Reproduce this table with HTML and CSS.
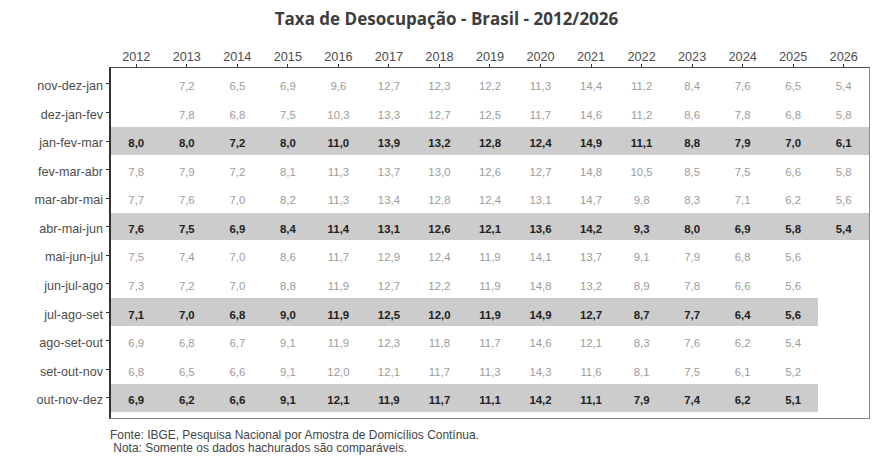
FILE: index.html
```html
<!DOCTYPE html>
<html lang="pt-BR">
<head>
<meta charset="utf-8">
<title>Taxa de Desocupação - Brasil - 2012/2026</title>
<link rel="stylesheet" href="styles.css">
</head>
<body>
<div class="figure">
  <h1 class="title">Taxa de Desocupação - Brasil - 2012/2026</h1>
  <div class="chart">
    <div class="corner"></div>
    <div class="xaxis">
      <div class="xcol"><span class="xlabel">2012</span><span class="xtick"></span></div>
      <div class="xcol"><span class="xlabel">2013</span><span class="xtick"></span></div>
      <div class="xcol"><span class="xlabel">2014</span><span class="xtick"></span></div>
      <div class="xcol"><span class="xlabel">2015</span><span class="xtick"></span></div>
      <div class="xcol"><span class="xlabel">2016</span><span class="xtick"></span></div>
      <div class="xcol"><span class="xlabel">2017</span><span class="xtick"></span></div>
      <div class="xcol"><span class="xlabel">2018</span><span class="xtick"></span></div>
      <div class="xcol"><span class="xlabel">2019</span><span class="xtick"></span></div>
      <div class="xcol"><span class="xlabel">2020</span><span class="xtick"></span></div>
      <div class="xcol"><span class="xlabel">2021</span><span class="xtick"></span></div>
      <div class="xcol"><span class="xlabel">2022</span><span class="xtick"></span></div>
      <div class="xcol"><span class="xlabel">2023</span><span class="xtick"></span></div>
      <div class="xcol"><span class="xlabel">2024</span><span class="xtick"></span></div>
      <div class="xcol"><span class="xlabel">2025</span><span class="xtick"></span></div>
      <div class="xcol"><span class="xlabel">2026</span><span class="xtick"></span></div>
    </div>
    <div class="yaxis">
      <div class="yrow"><span class="ylabel">nov-dez-jan</span><span class="ytick"></span></div>
      <div class="yrow"><span class="ylabel">dez-jan-fev</span><span class="ytick"></span></div>
      <div class="yrow"><span class="ylabel">jan-fev-mar</span><span class="ytick"></span></div>
      <div class="yrow"><span class="ylabel">fev-mar-abr</span><span class="ytick"></span></div>
      <div class="yrow"><span class="ylabel">mar-abr-mai</span><span class="ytick"></span></div>
      <div class="yrow"><span class="ylabel">abr-mai-jun</span><span class="ytick"></span></div>
      <div class="yrow"><span class="ylabel">mai-jun-jul</span><span class="ytick"></span></div>
      <div class="yrow"><span class="ylabel">jun-jul-ago</span><span class="ytick"></span></div>
      <div class="yrow"><span class="ylabel">jul-ago-set</span><span class="ytick"></span></div>
      <div class="yrow"><span class="ylabel">ago-set-out</span><span class="ytick"></span></div>
      <div class="yrow"><span class="ylabel">set-out-nov</span><span class="ytick"></span></div>
      <div class="yrow"><span class="ylabel">out-nov-dez</span><span class="ytick"></span></div>
    </div>
    <div class="panel">
      <div class="row">
        <span class="cell empty"></span><span class="cell">7,2</span><span class="cell">6,5</span><span class="cell">6,9</span><span class="cell">9,6</span><span class="cell">12,7</span><span class="cell">12,3</span><span class="cell">12,2</span><span class="cell">11,3</span><span class="cell">14,4</span><span class="cell">11,2</span><span class="cell">8,4</span><span class="cell">7,6</span><span class="cell">6,5</span><span class="cell">5,4</span>
      </div>
      <div class="row">
        <span class="cell empty"></span><span class="cell">7,8</span><span class="cell">6,8</span><span class="cell">7,5</span><span class="cell">10,3</span><span class="cell">13,3</span><span class="cell">12,7</span><span class="cell">12,5</span><span class="cell">11,7</span><span class="cell">14,6</span><span class="cell">11,2</span><span class="cell">8,6</span><span class="cell">7,8</span><span class="cell">6,8</span><span class="cell">5,8</span>
      </div>
      <div class="row comp">
        <span class="cell">8,0</span><span class="cell">8,0</span><span class="cell">7,2</span><span class="cell">8,0</span><span class="cell">11,0</span><span class="cell">13,9</span><span class="cell">13,2</span><span class="cell">12,8</span><span class="cell">12,4</span><span class="cell">14,9</span><span class="cell">11,1</span><span class="cell">8,8</span><span class="cell">7,9</span><span class="cell">7,0</span><span class="cell">6,1</span>
      </div>
      <div class="row">
        <span class="cell">7,8</span><span class="cell">7,9</span><span class="cell">7,2</span><span class="cell">8,1</span><span class="cell">11,3</span><span class="cell">13,7</span><span class="cell">13,0</span><span class="cell">12,6</span><span class="cell">12,7</span><span class="cell">14,8</span><span class="cell">10,5</span><span class="cell">8,5</span><span class="cell">7,5</span><span class="cell">6,6</span><span class="cell">5,8</span>
      </div>
      <div class="row">
        <span class="cell">7,7</span><span class="cell">7,6</span><span class="cell">7,0</span><span class="cell">8,2</span><span class="cell">11,3</span><span class="cell">13,4</span><span class="cell">12,8</span><span class="cell">12,4</span><span class="cell">13,1</span><span class="cell">14,7</span><span class="cell">9,8</span><span class="cell">8,3</span><span class="cell">7,1</span><span class="cell">6,2</span><span class="cell">5,6</span>
      </div>
      <div class="row comp">
        <span class="cell">7,6</span><span class="cell">7,5</span><span class="cell">6,9</span><span class="cell">8,4</span><span class="cell">11,4</span><span class="cell">13,1</span><span class="cell">12,6</span><span class="cell">12,1</span><span class="cell">13,6</span><span class="cell">14,2</span><span class="cell">9,3</span><span class="cell">8,0</span><span class="cell">6,9</span><span class="cell">5,8</span><span class="cell">5,4</span>
      </div>
      <div class="row">
        <span class="cell">7,5</span><span class="cell">7,4</span><span class="cell">7,0</span><span class="cell">8,6</span><span class="cell">11,7</span><span class="cell">12,9</span><span class="cell">12,4</span><span class="cell">11,9</span><span class="cell">14,1</span><span class="cell">13,7</span><span class="cell">9,1</span><span class="cell">7,9</span><span class="cell">6,8</span><span class="cell">5,6</span>
      </div>
      <div class="row">
        <span class="cell">7,3</span><span class="cell">7,2</span><span class="cell">7,0</span><span class="cell">8,8</span><span class="cell">11,9</span><span class="cell">12,7</span><span class="cell">12,2</span><span class="cell">11,9</span><span class="cell">14,8</span><span class="cell">13,2</span><span class="cell">8,9</span><span class="cell">7,8</span><span class="cell">6,6</span><span class="cell">5,6</span>
      </div>
      <div class="row comp">
        <span class="cell">7,1</span><span class="cell">7,0</span><span class="cell">6,8</span><span class="cell">9,0</span><span class="cell">11,9</span><span class="cell">12,5</span><span class="cell">12,0</span><span class="cell">11,9</span><span class="cell">14,9</span><span class="cell">12,7</span><span class="cell">8,7</span><span class="cell">7,7</span><span class="cell">6,4</span><span class="cell">5,6</span>
      </div>
      <div class="row">
        <span class="cell">6,9</span><span class="cell">6,8</span><span class="cell">6,7</span><span class="cell">9,1</span><span class="cell">11,9</span><span class="cell">12,3</span><span class="cell">11,8</span><span class="cell">11,7</span><span class="cell">14,6</span><span class="cell">12,1</span><span class="cell">8,3</span><span class="cell">7,6</span><span class="cell">6,2</span><span class="cell">5,4</span>
      </div>
      <div class="row">
        <span class="cell">6,8</span><span class="cell">6,5</span><span class="cell">6,6</span><span class="cell">9,1</span><span class="cell">12,0</span><span class="cell">12,1</span><span class="cell">11,7</span><span class="cell">11,3</span><span class="cell">14,3</span><span class="cell">11,6</span><span class="cell">8,1</span><span class="cell">7,5</span><span class="cell">6,1</span><span class="cell">5,2</span>
      </div>
      <div class="row comp">
        <span class="cell">6,9</span><span class="cell">6,2</span><span class="cell">6,6</span><span class="cell">9,1</span><span class="cell">12,1</span><span class="cell">11,9</span><span class="cell">11,7</span><span class="cell">11,1</span><span class="cell">14,2</span><span class="cell">11,1</span><span class="cell">7,9</span><span class="cell">7,4</span><span class="cell">6,2</span><span class="cell">5,1</span>
      </div>
    </div>
  </div>
  <div class="caption">
    <div class="caption-line">Fonte: IBGE, Pesquisa Nacional por Amostra de Domicílios Contínua.</div>
    <div class="caption-line"> Nota: Somente os dados hachurados são comparáveis.</div>
  </div>
</div>
</body>
</html>
```

FILE: styles.css
```css
html, body {
  margin: 0;
  padding: 0;
  background: #ffffff;
}

.figure {
  width: 890px;
  height: 466px;
  font-family: "Liberation Sans", Arial, sans-serif;
}

.title {
  margin: 0;
  padding-top: 7px;
  height: 24px;
  line-height: 24px;
  font-family: "Open Sans", "Liberation Sans", sans-serif;
  font-weight: 700;
  font-size: 17px;
  color: #3d3d3d;
  text-align: center;
  padding-left: 3px;
}

.chart {
  margin-top: 19px;
  display: grid;
  grid-template-columns: 109px 761px;
  grid-template-rows: 17px auto;
}

.corner {
  grid-column: 1;
  grid-row: 1;
}

.xaxis {
  grid-column: 2;
  grid-row: 1;
  display: grid;
  grid-template-columns: repeat(15, 1fr);
  padding-left: 2px;
  padding-right: 1px;
}

.xcol {
  display: flex;
  flex-direction: column;
  align-items: center;
}

.xlabel {
  height: 14px;
  line-height: 14px;
  font-size: 12.7px;
  color: #4d4d4d;
}

.xtick {
  margin-top: 0;
  width: 1px;
  height: 3px;
  background: #333333;
}

.yaxis {
  grid-column: 1;
  grid-row: 2;
  display: grid;
  grid-template-rows: repeat(12, 27.6px);
  row-gap: 0.95px;
  padding-top: 3.2px;
}

.yrow {
  display: flex;
  align-items: center;
  justify-content: flex-end;
}

.ylabel {
  font-size: 12.6px;
  line-height: 14px;
  color: #4d4d4d;
  padding-top: 4.6px;
  margin-right: 3px;
}

.ytick {
  width: 3px;
  height: 1px;
  background: #333333;
}

.panel {
  grid-column: 2;
  grid-row: 2;
  height: 348px;
  border-top: 1px solid #4a4a4a;
  border-left: 2px solid #333333;
  border-right: 1px solid #8a8a8a;
  border-bottom: 1px solid #8a8a8a;
  padding-top: 2.2px;
  box-sizing: content-box;
  display: grid;
  grid-template-rows: repeat(12, 27.6px);
  row-gap: 0.95px;
  align-content: start;
}

.row {
  display: grid;
  grid-template-columns: repeat(15, 50.533px);
}

.cell {
  display: flex;
  align-items: center;
  justify-content: center;
  box-sizing: border-box;
  padding-top: 4.6px;
  font-size: 11.4px;
  line-height: 14px;
  color: #9c9c9c;
}

.row.comp .cell {
  background: #cccccc;
  color: #222222;
  font-weight: 700;
}

.row.comp .cell.empty {
  background: transparent;
}

.caption {
  margin-top: 10px;
  padding-left: 110px;
  font-size: 11.95px;
  line-height: 13px;
  color: #444444;
}

.caption-line {
  white-space: pre;
}
```
